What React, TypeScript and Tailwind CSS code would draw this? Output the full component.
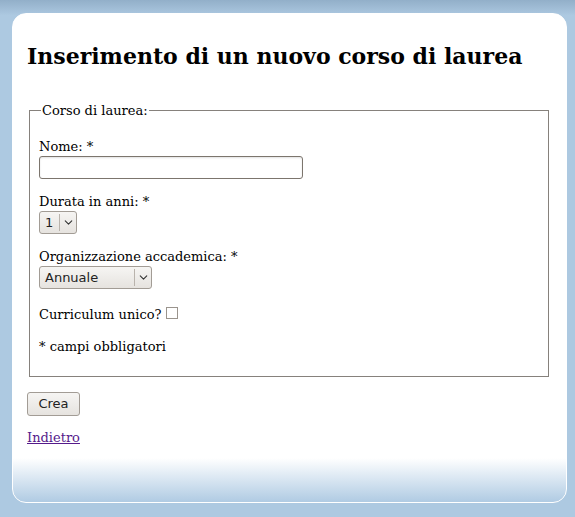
import { ChevronDown } from "lucide-react";

const serif = "font-['DejaVu_Serif','Liberation_Serif',serif]";
const sans = "font-['DejaVu_Sans','Liberation_Sans',sans-serif]";

function Select({ value, width }: { value: string; width: string }) {
  return (
    <div
      className={`flex ${width} h-[23px] items-stretch rounded-[3px] border border-[#a29c95] bg-gradient-to-b from-[#f6f5f3] to-[#e6e3df] text-[13px] text-[#222] ${sans}`}
    >
      <span className="flex flex-1 items-center pl-[5px]">{value}</span>
      <span className="my-[2px] w-px bg-[#b9b3ac]" />
      <span className="flex w-[16px] items-center justify-center">
        <ChevronDown size={13} strokeWidth={2} className="text-[#333]" />
      </span>
    </div>
  );
}

export default function App() {
  return (
    <div className="h-[517px] w-[575px] bg-gradient-to-b from-[#92afc9] via-[#adc9e1] via-[3%] to-[#adc9e1] pt-[13px] pl-[12px]">
      <div className="flex h-[490px] w-[555px] flex-col overflow-hidden rounded-[14px] border border-white bg-gradient-to-b from-white from-[91%] to-[#b0cbe3]">
        <div className={`px-[14px] text-black ${serif}`}>
          <h1 className="mt-[27px] text-[22px] font-bold leading-[30px]">
            Inserimento di un nuovo corso di laurea
          </h1>

          <fieldset className="mt-[32px] ml-[2px] mr-[3px] border border-[#86817c] px-[9px] pb-[22px] text-[13px] leading-[15px]">
            <legend className="px-[1px] ml-[2px]">Corso di laurea:</legend>

            <div className="mt-[21px]">Nome: *</div>
            <input
              type="text"
              className="mt-[2px] block h-[23px] w-[264px] rounded-[3px] border border-[#7c756d] bg-white shadow-[inset_0_1px_2px_rgba(0,0,0,0.12)] outline-none"
            />

            <div className="mt-[15px]">Durata in anni: *</div>
            <div className="mt-[2px]">
              <Select value="1" width="w-[38px]" />
            </div>

            <div className="mt-[15px]">Organizzazione accademica: *</div>
            <div className="mt-[2px]">
              <Select value="Annuale" width="w-[113px]" />
            </div>

            <div className="mt-[18px] flex items-center gap-[4px]">
              <span>Curriculum unico?</span>
              <span className="mb-[3px] inline-block h-[12px] w-[12px] border border-[#9a948d] bg-white" />
            </div>

            <div className="mt-[17px]">* campi obbligatori</div>
          </fieldset>

          <button
            className={`mt-[15px] h-[24px] w-[53px] rounded-[3px] border border-[#a29c95] bg-gradient-to-b from-[#f6f5f3] to-[#e6e3df] text-[13px] text-[#222] ${sans}`}
          >
            Crea
          </button>

          <div className="mt-[14px] text-[13px] leading-[15px]">
            <a href="#" className="text-[#551a8b] underline">
              Indietro
            </a>
          </div>
        </div>
      </div>
    </div>
  );
}
